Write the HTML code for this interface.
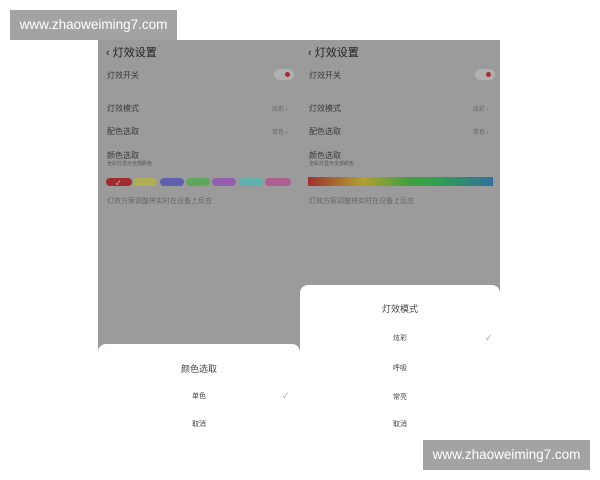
<!DOCTYPE html><html><head><meta charset="utf-8"><style>
*{margin:0;padding:0;box-sizing:border-box}
body{width:600px;height:480px;background:#fff;position:relative;overflow:hidden;font-family:"Liberation Sans","Noto Sans CJK SC",sans-serif}
.a{position:absolute;white-space:nowrap}
.wm{position:absolute;background:#a3a3a3;color:#fff;font-size:13.5px;line-height:30px;text-align:center;width:167px;height:30px}
.p{position:absolute;top:40px;height:400px;background:#9b9b9b}
.t{font-size:10px;color:#3a3a3a}
.s{font-size:6px;color:#555}
.g{font-size:6px;color:#666}
.pill{position:absolute;top:178px;height:8px;width:24px;border-radius:4px}
.sheet{position:absolute;background:#fff;border-radius:8px 8px 0 0}
.c{font-size:8px;color:#444;text-align:center;position:absolute;width:100%}
</style></head><body>
<div class="wm" style="left:10px;top:10px">www.zhaoweiming7.com</div>
<div class="p" style="left:98px;width:202px"></div>
<div class="p" style="left:300px;width:200px"></div>

<div class="a" style="left:106px;top:44px;font-size:11px;color:#222">‹ 灯效设置</div>
<div class="a t" style="left:107px;top:70px;font-size:8px">灯效开关</div>
<div class="a" style="left:274px;top:69px;width:20px;height:11px;border-radius:6px;background:#b0b0b0"></div>
<div class="a" style="left:285px;top:72px;width:5px;height:5px;border-radius:3px;background:#a03030"></div>
<div class="a t" style="left:107px;top:103px;font-size:8px">灯效模式</div>
<div class="a g" style="left:272px;top:104px">炫彩 ›</div>
<div class="a t" style="left:107px;top:126px;font-size:8px">配色选取</div>
<div class="a g" style="left:272px;top:127px">单色 ›</div>
<div class="a t" style="left:107px;top:150px;font-size:8px">颜色选取</div>
<div class="a s" style="left:107px;top:160px;font-size:5px">全彩灯显示全部颜色</div>
<div class="pill" style="left:106px;background:#a02a2c;width:26px"></div>
<div class="a" style="left:116px;top:178px;font-size:6px;color:#eee">✓</div>
<div class="pill" style="left:133px;background:#aeae55"></div>
<div class="pill" style="left:160px;background:#5f5fae"></div>
<div class="pill" style="left:186px;background:#5fa65f"></div>
<div class="pill" style="left:212px;background:#935fae"></div>
<div class="pill" style="left:239px;background:#5fb0ae"></div>
<div class="pill" style="left:265px;background:#ae5f92;width:26px"></div>
<div class="a g" style="left:107px;top:196px;font-size:7px">灯效方案调整将实时在设备上反应</div>

<div class="a" style="left:308px;top:44px;font-size:11px;color:#222">‹ 灯效设置</div>
<div class="a t" style="left:309px;top:70px;font-size:8px">灯效开关</div>
<div class="a" style="left:475px;top:69px;width:20px;height:11px;border-radius:6px;background:#b0b0b0"></div>
<div class="a" style="left:486px;top:72px;width:5px;height:5px;border-radius:3px;background:#a03030"></div>
<div class="a t" style="left:309px;top:103px;font-size:8px">灯效模式</div>
<div class="a g" style="left:473px;top:104px">炫彩 ›</div>
<div class="a t" style="left:309px;top:126px;font-size:8px">配色选取</div>
<div class="a g" style="left:473px;top:127px">单色 ›</div>
<div class="a t" style="left:309px;top:150px;font-size:8px">颜色选取</div>
<div class="a s" style="left:309px;top:160px;font-size:5px">全彩灯显示全部颜色</div>
<div class="a" style="left:308px;top:177px;width:185px;height:9px;background:linear-gradient(90deg,#a03030,#b0a030 30%,#40a040 55%,#30a050 70%,#3070a0)"></div>
<div class="a g" style="left:309px;top:196px;font-size:7px">灯效方案调整将实时在设备上反应</div>

<div class="sheet" style="left:98px;top:344px;width:202px;height:136px">
<div class="c" style="top:18px;font-size:9px">颜色选取</div>
<div class="c" style="top:47px;font-size:7px">单色</div>
<div class="a" style="left:185px;top:47px;font-size:7px;color:#888">✓</div>
<div class="c" style="top:75px;font-size:7px">取消</div>
</div>
<div class="sheet" style="left:300px;top:285px;width:200px;height:195px">
<div class="c" style="top:17px;font-size:9px">灯效模式</div>
<div class="c" style="top:48px;font-size:7px">炫彩</div>
<div class="a" style="left:186px;top:48px;font-size:7px;color:#888">✓</div>
<div class="c" style="top:78px;font-size:7px">呼吸</div>
<div class="c" style="top:107px;font-size:7px">常亮</div>
<div class="c" style="top:134px;font-size:7px">取消</div>
</div>
<div class="wm" style="left:423px;top:440px">www.zhaoweiming7.com</div>
</body></html>
